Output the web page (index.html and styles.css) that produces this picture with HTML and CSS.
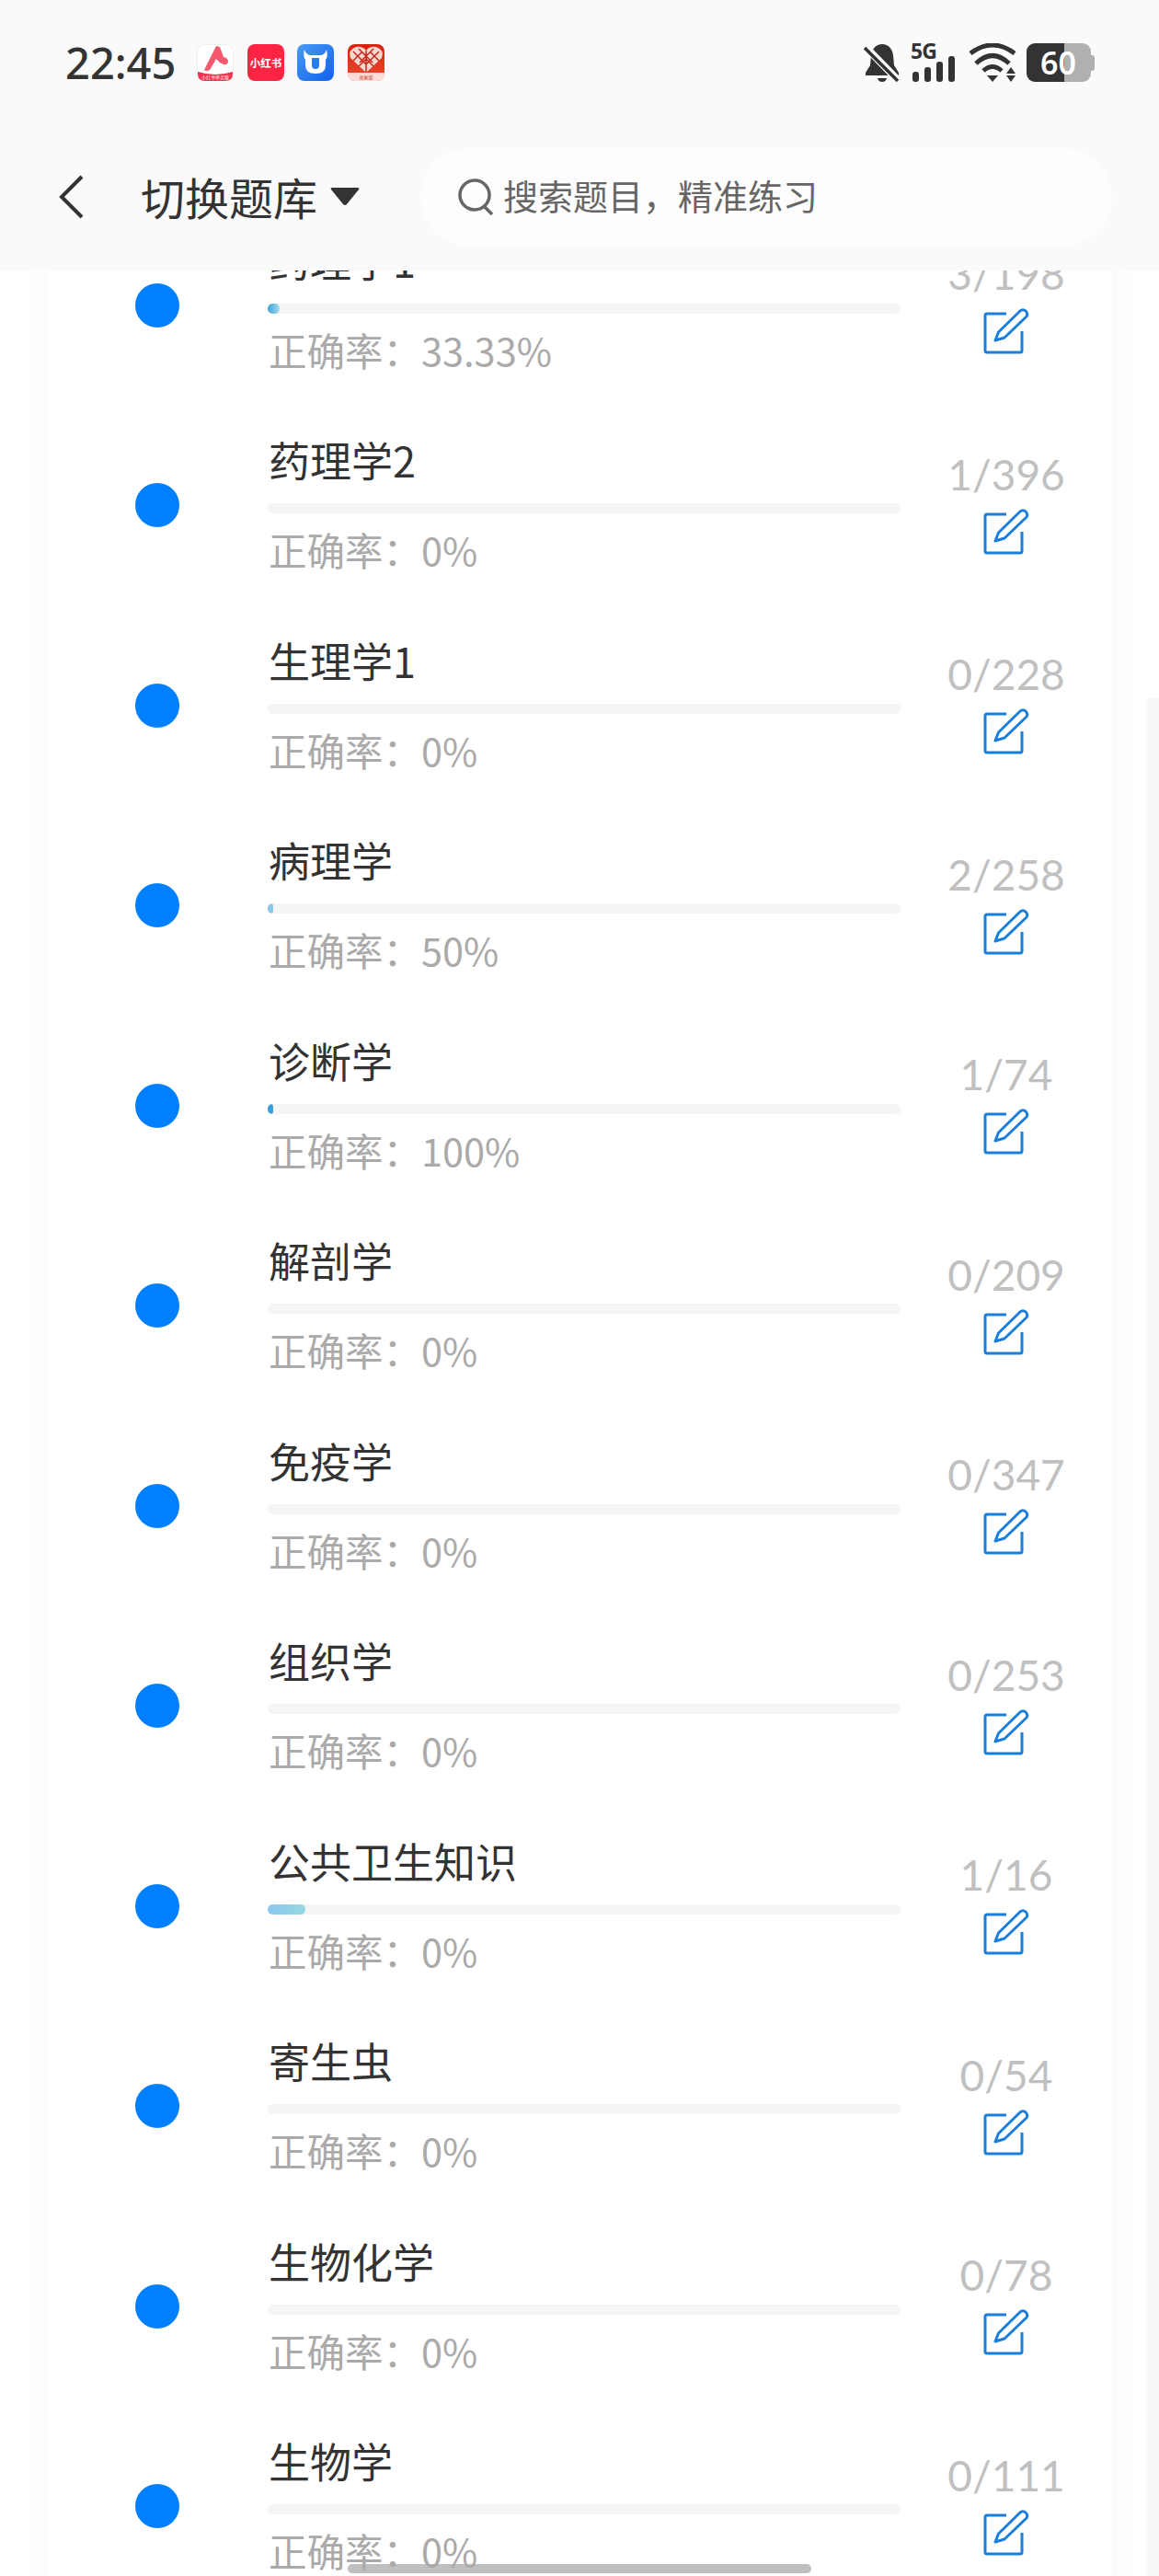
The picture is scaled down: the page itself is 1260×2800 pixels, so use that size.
FILE: index.html
```html
<!DOCTYPE html>
<html lang="zh-CN">
<head>
    <meta charset="UTF-8">
    <meta name="viewport" content="width=device-width, initial-scale=1.0">
    <title>切换题库</title>
    <link rel="stylesheet" href="styles.css">
</head>
<body>
    <svg class="defs" width="0" height="0">
        <symbol id="edit" viewBox="0 0 50 50">
            <path d="M25 6H4Q2 6 2 8V46Q2 48 4 48H40Q42 48 42 46V25" fill="none" stroke="#1a7fdc" stroke-width="3"/>
            <path d="M13 35L16.5 26L40 3Q43 .5 46 3Q49 6 47 9L23 32Z" fill="none" stroke="#1a7fdc" stroke-width="3" stroke-linejoin="round"/>
        </symbol>
    </svg>

    <header class="top">
        <div class="status">
            <div class="status-left">
                <span class="time">22:45</span>
                <div class="apps">
                    <svg class="app" viewBox="0 0 40 40">
                        <rect x=".5" y=".5" width="39" height="39" rx="8" fill="#fff" stroke="#eee"/>
                        <path d="M1 30Q20 36 39 30V32Q39 40 31 40H9Q1 40 1 32Z" fill="#f0304c"/>
                        <path d="M21 2L25 3L29 14Q34 15 34 19Q33 23 29 22Q24 20 21 16L14 28Q10 30 8 28Z" fill="#f4586c"/>
                        <text x="20" y="37.5" class="app-tiny">小红书单买版</text>
                    </svg>
                    <svg class="app" viewBox="0 0 40 40">
                        <rect width="40" height="40" rx="8" fill="#fb2543"/>
                        <text x="20" y="25" class="app-red">小红书</text>
                    </svg>
                    <svg class="app" viewBox="0 0 40 40">
                        <defs>
                            <linearGradient id="blue" x1="0" y1="0" x2="1" y2="1">
                                <stop offset="0" stop-color="#4a9af2"/>
                                <stop offset="1" stop-color="#0f62ee"/>
                            </linearGradient>
                        </defs>
                        <rect width="40" height="40" rx="8" fill="url(#blue)"/>
                        <path d="M8 6Q10 12 15 12H25Q30 12 32 6Q34 13 31 17V23Q31 32 20 32Q9 32 9 23V17Q6 13 8 6Z" fill="#fff"/>
                        <path d="M16 15H24V23Q24 27 20 27Q16 27 16 23Z" fill="#2b7bf0"/>
                    </svg>
                    <svg class="app" viewBox="0 0 40 40">
                        <defs>
                            <linearGradient id="pdd" x1="0" y1="0" x2="0" y2="1">
                                <stop offset="0" stop-color="#d9200f"/>
                                <stop offset="1" stop-color="#ee4a32"/>
                            </linearGradient>
                        </defs>
                        <rect width="40" height="40" rx="8" fill="url(#pdd)"/>
                        <path d="M20 31L3 15Q0 6 9 3Q16 2 20 7Q24 2 31 3Q40 6 37 15Z" fill="#f4d8d0"/>
                        <path d="M20 7V31M6 8L20 22L34 8M6 18L15 9M34 18L25 9M12 5L27 20M28 5L13 20M12 24L20 16L28 24" stroke="#c9261a" stroke-width="1.5" fill="none"/>
                        <path d="M0 31H40V32Q40 40 32 40H8Q0 40 0 32Z" fill="#fbdcd6"/>
                        <text x="20" y="38" class="app-shop">商家版</text>
                    </svg>
                </div>
            </div>
            <div class="status-right">
                <svg class="bell" viewBox="0 0 40 42">
                    <path d="M20 1C27 1 31 6 32 13L33 24L38 32V35H2V32L7 24L8 13C9 6 13 1 20 1Z" fill="#333"/>
                    <path d="M15 38H25Q24 42 20 42Q16 42 15 38Z" fill="#333"/>
                    <path d="M-1 1L40 43" stroke="#fafafa" stroke-width="8"/>
                    <path d="M1 5L37 41" stroke="#333" stroke-width="3.5"/>
                </svg>
                <div class="signal">
                    <span class="net">5G</span>
                    <div class="bars">
                        <i class="b1"></i><i class="b2"></i><i class="b3"></i><i class="b4"></i>
                    </div>
                </div>
                <svg class="wifi" viewBox="0 0 52 42">
                    <g fill="none" stroke="#333" stroke-width="5">
                        <path d="M2 11Q26 -7 50 11"/>
                        <path d="M8 22Q26 5 44 22"/>
                        <path d="M16 30Q26 21 36 30"/>
                    </g>
                    <path d="M20 35H32L26 42ZM41 33L46 26L51 33ZM41 35H51L46 42Z" fill="#333"/>
                </svg>
                <div class="battery"><span>60</span></div>
            </div>
        </div>
        <div class="nav">
            <svg class="back" viewBox="0 0 28 48">
                <path d="M25 2L3 24L25 46" fill="none" stroke="#333" stroke-width="4"/>
            </svg>
            <div class="switch">切换题库</div>
            <svg class="caret" viewBox="0 0 32 20">
                <path d="M2 0H30Q32 0 31 2L18 18Q16 20 14 18L1 2Q0 0 2 0Z" fill="#333"/>
            </svg>
            <div class="search">
                <svg class="search-icon" viewBox="0 0 40 40">
                    <circle cx="18" cy="18" r="16" fill="none" stroke="#666" stroke-width="3.5"/>
                    <path d="M28 30L37 39" stroke="#666" stroke-width="3.5"/>
                </svg>
                <span class="search-text">搜索题目，精准练习</span>
            </div>
        </div>
    </header>

    <main class="card">
        <div class="row">
            <span class="dot"></span>
            <div class="info">
                <div class="name">药理学1</div>
                <div class="bar"><div class="fill fill-mix" style="width: 13px"></div></div>
                <div class="rate">正确率：33.33%</div>
            </div>
            <div class="side">
                <div class="count">3/198</div>
                <svg class="edit"><use href="#edit"/></svg>
            </div>
        </div>
        <div class="row">
            <span class="dot"></span>
            <div class="info">
                <div class="name">药理学2</div>
                <div class="bar"></div>
                <div class="rate">正确率：0%</div>
            </div>
            <div class="side">
                <div class="count">1/396</div>
                <svg class="edit"><use href="#edit"/></svg>
            </div>
        </div>
        <div class="row">
            <span class="dot"></span>
            <div class="info">
                <div class="name">生理学1</div>
                <div class="bar"></div>
                <div class="rate">正确率：0%</div>
            </div>
            <div class="side">
                <div class="count">0/228</div>
                <svg class="edit"><use href="#edit"/></svg>
            </div>
        </div>
        <div class="row">
            <span class="dot"></span>
            <div class="info">
                <div class="name">病理学</div>
                <div class="bar"><div class="fill fill-light" style="width: 6px"></div></div>
                <div class="rate">正确率：50%</div>
            </div>
            <div class="side">
                <div class="count">2/258</div>
                <svg class="edit"><use href="#edit"/></svg>
            </div>
        </div>
        <div class="row">
            <span class="dot"></span>
            <div class="info">
                <div class="name">诊断学</div>
                <div class="bar"><div class="fill fill-dark" style="width: 6px"></div></div>
                <div class="rate">正确率：100%</div>
            </div>
            <div class="side">
                <div class="count">1/74</div>
                <svg class="edit"><use href="#edit"/></svg>
            </div>
        </div>
        <div class="row">
            <span class="dot"></span>
            <div class="info">
                <div class="name">解剖学</div>
                <div class="bar"></div>
                <div class="rate">正确率：0%</div>
            </div>
            <div class="side">
                <div class="count">0/209</div>
                <svg class="edit"><use href="#edit"/></svg>
            </div>
        </div>
        <div class="row">
            <span class="dot"></span>
            <div class="info">
                <div class="name">免疫学</div>
                <div class="bar"></div>
                <div class="rate">正确率：0%</div>
            </div>
            <div class="side">
                <div class="count">0/347</div>
                <svg class="edit"><use href="#edit"/></svg>
            </div>
        </div>
        <div class="row">
            <span class="dot"></span>
            <div class="info">
                <div class="name">组织学</div>
                <div class="bar"></div>
                <div class="rate">正确率：0%</div>
            </div>
            <div class="side">
                <div class="count">0/253</div>
                <svg class="edit"><use href="#edit"/></svg>
            </div>
        </div>
        <div class="row">
            <span class="dot"></span>
            <div class="info">
                <div class="name">公共卫生知识</div>
                <div class="bar"><div class="fill fill-wide" style="width: 41px"></div></div>
                <div class="rate">正确率：0%</div>
            </div>
            <div class="side">
                <div class="count">1/16</div>
                <svg class="edit"><use href="#edit"/></svg>
            </div>
        </div>
        <div class="row">
            <span class="dot"></span>
            <div class="info">
                <div class="name">寄生虫</div>
                <div class="bar"></div>
                <div class="rate">正确率：0%</div>
            </div>
            <div class="side">
                <div class="count">0/54</div>
                <svg class="edit"><use href="#edit"/></svg>
            </div>
        </div>
        <div class="row">
            <span class="dot"></span>
            <div class="info">
                <div class="name">生物化学</div>
                <div class="bar"></div>
                <div class="rate">正确率：0%</div>
            </div>
            <div class="side">
                <div class="count">0/78</div>
                <svg class="edit"><use href="#edit"/></svg>
            </div>
        </div>
        <div class="row">
            <span class="dot"></span>
            <div class="info">
                <div class="name">生物学</div>
                <div class="bar"></div>
                <div class="rate">正确率：0%</div>
            </div>
            <div class="side">
                <div class="count">0/111</div>
                <svg class="edit"><use href="#edit"/></svg>
            </div>
        </div>
    </main>

    <div class="scroll-strip"></div>
    <div class="home-bar"></div>
</body>
</html>
```

FILE: styles.css
```css
* {
    box-sizing: border-box;
}

html, body {
    height: 2800px;
}

body {
    margin: 0;
    position: relative;
    overflow: hidden;
    background-color: #fff;
    color: #333;
    font-family: "Noto Sans CJK SC", "Noto Sans", sans-serif;
}

.defs {
    position: absolute;
}

/* top area */
.top {
    position: relative;
    z-index: 2;
    height: 294px;
    background-color: #fafafa;
}

.status {
    display: flex;
    justify-content: space-between;
    height: 161px;
    padding: 47px 74px 0 71px;
}

.status-left, .status-right {
    display: flex;
    height: 42px;
}

.time {
    width: 143px;
    font-family: "Noto Sans", sans-serif;
    font-size: 47px;
    font-weight: 500;
    line-height: 42px;
    white-space: nowrap;
}

.apps {
    display: flex;
    gap: 14.5px;
    padding-top: 1px;
}

.app {
    width: 40px;
    height: 40px;
}

.app-tiny, .app-shop {
    font-size: 5px;
    text-anchor: middle;
    fill: #fff;
}

.app-shop {
    fill: #c8402e;
}

.app-red {
    font-size: 11.5px;
    font-weight: 700;
    text-anchor: middle;
    fill: #fff;
}

.status-right {
    align-items: flex-start;
}

.bell {
    width: 40px;
    height: 42px;
    margin-right: 11px;
}

.signal {
    width: 49px;
    height: 42px;
    margin-right: 14px;
    position: relative;
}

.net {
    display: block;
    font-family: "Noto Sans", sans-serif;
    font-size: 23px;
    font-weight: 700;
    line-height: 16px;
    letter-spacing: -1px;
}

.bars {
    position: absolute;
    left: 2px;
    bottom: 0;
    display: flex;
    align-items: flex-end;
    gap: 6px;
}

.bars i {
    display: block;
    width: 7px;
    border-radius: 3px;
    background-color: #333;
}

.b1 { height: 11px; }
.b2 { height: 16px; }
.b3 { height: 22px; }
.b4 { height: 28px; }

.wifi {
    width: 52px;
    height: 42px;
    margin-right: 11px;
}

.battery {
    position: relative;
    width: 70px;
    height: 42px;
    border-radius: 9px;
    background: linear-gradient(to right, #333 41px, #b0b0b0 41px);
    color: #fff;
    font-family: "Noto Sans", sans-serif;
    font-size: 34px;
    font-weight: 600;
    line-height: 42px;
    padding-left: 15px;
}

.battery::after {
    content: "";
    position: absolute;
    right: -4px;
    top: 13px;
    width: 4px;
    height: 17px;
    border-radius: 0 3px 3px 0;
    background-color: #b0b0b0;
}

.nav {
    display: flex;
    align-items: center;
    height: 106px;
    padding-left: 64px;
}

.back {
    width: 28px;
    height: 48px;
}

.switch {
    margin-left: 61px;
    margin-top: -2px;
    font-size: 48px;
    line-height: 60px;
    white-space: nowrap;
}

.caret {
    width: 32px;
    height: 20px;
    margin-left: 14px;
}

.search {
    display: flex;
    align-items: center;
    width: 752px;
    height: 106px;
    margin-left: 66px;
    padding-left: 41px;
    border-radius: 53px;
    background-color: #fdfdfd;
    color: #666;
    font-size: 38px;
}

.search-icon {
    width: 40px;
    height: 40px;
    margin-right: 9px;
}

.search-text {
    margin-top: -6px;
}

/* list */
.card {
    width: 1157px;
    margin: -71px 0 0 52px;
    background-color: #fff;
    box-shadow: 0 0 30px rgba(0, 0, 0, 0.04);
}

.row {
    display: flex;
    align-items: center;
    height: 217.5px;
    padding-left: 95px;
}

.dot {
    flex: none;
    width: 48px;
    height: 48px;
    border-radius: 50%;
    background-color: #007fff;
    margin-right: 96px;
}

.info {
    flex: none;
    width: 688px;
}

.name {
    font-size: 45px;
    line-height: 50px;
    padding-left: 1px;
    white-space: nowrap;
    margin-top: -1px;
}

.bar {
    height: 11px;
    margin-top: 22px;
    border-radius: 5px;
    background-color: #f5f5f5;
    overflow: hidden;
}

.fill {
    height: 100%;
    border-radius: 5px;
}

.fill-mix {
    background: linear-gradient(to right, #3ba3d8, #a8dcf0);
}

.fill-light {
    background-color: #8cc8e8;
}

.fill-dark {
    background-color: #3aa0dc;
}

.fill-wide {
    background: linear-gradient(to right, #8cc6f0, #96d8e0);
}

.rate {
    margin-top: 14px;
    padding-left: 1px;
    color: #aaa;
    font-size: 41.5px;
    line-height: 50px;
    white-space: nowrap;
}

.side {
    flex: 1;
    display: flex;
    flex-direction: column;
    align-items: center;
}

.count {
    color: #c0c0c0;
    font-family: "Lato", sans-serif;
    font-size: 46px;
    line-height: 50px;
}

.edit {
    width: 50px;
    height: 50px;
    margin-top: 12px;
    margin-bottom: 5px;
}

/* overlays */
.scroll-strip {
    position: absolute;
    right: 0;
    top: 759px;
    bottom: 0;
    width: 13px;
    background-color: #f8f8f8;
}

.home-bar {
    position: absolute;
    left: 378px;
    bottom: 3px;
    width: 504px;
    height: 10px;
    border-radius: 5px;
    background-color: rgba(170, 170, 170, 0.75);
}
```
